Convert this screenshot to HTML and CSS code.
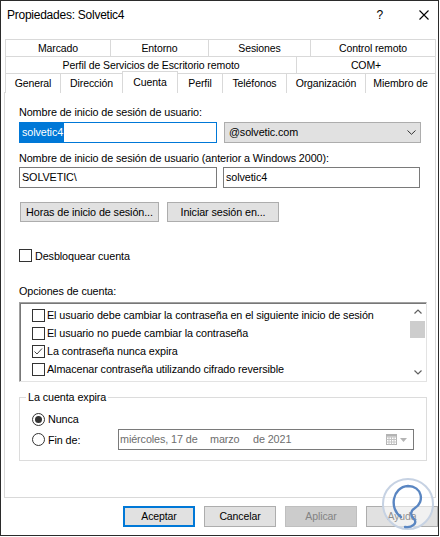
FILE: index.html
```html
<!DOCTYPE html>
<html lang="es">
<head>
<meta charset="utf-8">
<link rel="stylesheet" href="styles.css">
</head>
<body>
<div class="window">
  <div class="titlebar">
    <span class="title">Propiedades: Solvetic4</span>
    <span class="help">?</span>
    <svg class="close" width="10" height="10" viewBox="0 0 10 10"><path d="M0.5 0.5 L9.5 9.5 M9.5 0.5 L0.5 9.5" stroke="#000" stroke-width="1.1" fill="none"/></svg>
  </div>

  <div class="tabs">
    <div class="tabrow r1">
      <div class="tab">Marcado</div>
      <div class="tab">Entorno</div>
      <div class="tab">Sesiones</div>
      <div class="tab">Control remoto</div>
    </div>
    <div class="tabrow r2">
      <div class="tab">Perfil de Servicios de Escritorio remoto</div>
      <div class="tab">COM+</div>
    </div>
    <div class="tabrow r3">
      <div class="tab">General</div>
      <div class="tab">Dirección</div>
      <div class="tab sel">Cuenta</div>
      <div class="tab">Perfil</div>
      <div class="tab">Teléfonos</div>
      <div class="tab">Organización</div>
      <div class="tab">Miembro de</div>
    </div>
  </div>

  <div class="panel">
    <div class="lbl">Nombre de inicio de sesión de usuario:</div>
    <div class="frow frow1">
      <div class="field focus w198"><span class="seltext">solvetic4</span></div>
      <div class="field combo w197"><span>@solvetic.com</span>
        <svg width="9" height="5" viewBox="0 0 9 5"><path d="M0.5 0.5 L4.5 4.3 L8.5 0.5" stroke="#333" stroke-width="1" fill="none"/></svg>
      </div>
    </div>
    <div class="lbl lbl2">Nombre de inicio de sesión de usuario (anterior a Windows 2000):</div>
    <div class="frow frow2">
      <div class="field w198">SOLVETIC\</div>
      <div class="field w197">solvetic4</div>
    </div>
    <div class="brow">
      <div class="btn b1">Horas de inicio de sesión...</div>
      <div class="btn b2">Iniciar sesión en...</div>
    </div>
    <div class="check unlock"><span class="cbx"></span><span>Desbloquear cuenta</span></div>
    <div class="lbl lbl3">Opciones de cuenta:</div>
    <div class="listbox">
      <div class="items">
        <div class="item"><span class="cbx"></span><span>El usuario debe cambiar la contraseña en el siguiente inicio de sesión</span></div>
        <div class="item"><span class="cbx"></span><span>El usuario no puede cambiar la contraseña</span></div>
        <div class="item"><span class="cbx"><svg width="11" height="11" viewBox="0 0 11 11"><path d="M1.5 5.5 L4 8 L9 2.5" stroke="#444" stroke-width="1" fill="none"/></svg></span><span>La contraseña nunca expira</span></div>
        <div class="item"><span class="cbx"></span><span>Almacenar contraseña utilizando cifrado reversible</span></div>
      </div>
      <div class="vscroll">
        <div class="arrow"><svg width="8" height="5" viewBox="0 0 8 5"><path d="M0.5 4.5 L4 1 L7.5 4.5" stroke="#606060" stroke-width="1.2" fill="none"/></svg></div>
        <div class="thumb"></div>
        <div class="track"></div>
        <div class="arrow"><svg width="8" height="5" viewBox="0 0 8 5"><path d="M0.5 0.5 L4 4 L7.5 0.5" stroke="#606060" stroke-width="1.2" fill="none"/></svg></div>
      </div>
    </div>
    <fieldset class="group">
      <legend>La cuenta expira</legend>
      <div class="radio r-nunca"><span class="rdo on"></span><span>Nunca</span></div>
      <div class="radio r-fin"><span class="rdo"></span><span class="rlabel">Fin de:</span>
        <div class="datepick">
          <span class="d1">miércoles, 17 de</span><span class="d2">marzo</span><span>de 2021</span>
          <span class="dicons">
            <svg width="11" height="11" viewBox="0 0 11 11"><rect x="0.5" y="0.5" width="10" height="10" fill="#fff" stroke="#b4b4b4"/><path d="M0.5 3 H10.5 M0.5 5.5 H10.5 M0.5 8 H10.5 M3 3 V10.5 M5.5 3 V10.5 M8 3 V10.5" stroke="#c4c4c4" stroke-width="1"/><rect x="0.5" y="0.5" width="10" height="2" fill="#b4b4b4"/></svg>
            <svg width="7" height="4" viewBox="0 0 7 4"><path d="M0 0 H7 L3.5 4 Z" fill="#b4b4b4"/></svg>
          </span>
        </div>
      </div>
    </fieldset>
  </div>

  <div class="footer">
    <div class="pbtn default">Aceptar</div>
    <div class="pbtn">Cancelar</div>
    <div class="pbtn disabled">Aplicar</div>
    <div class="pbtn">Ayuda</div>
  </div>

  <svg class="watermark" width="58" height="62" viewBox="0 0 58 62">
    <circle cx="29" cy="29" r="25" fill="rgba(255,255,255,0.55)" stroke="#c6d2e3" stroke-width="2"/>
    <path d="M22 42 C10 34 13 12 29 11 C43 11 46 27 36 33 C31 36 31 40 35 44 C39 48 33 53 26 52" stroke="#5a86c2" stroke-width="2.4" fill="none" stroke-linecap="round"/>
  </svg>
</div>
</body>
</html>
```

FILE: styles.css
```css
* { box-sizing: border-box; }

body {
  margin: 0;
  background: #fff;
  font-family: "Liberation Sans", Arial, sans-serif;
  font-size: 10.5px;
  letter-spacing: -0.1px;
  color: #000;
}

.window {
  position: relative;
  width: 439px;
  height: 536px;
  border: 1px solid #2b2b2b;
  background: #fff;
  overflow: hidden;
}

/* title bar */
.titlebar {
  height: 27px;
  display: flex;
  align-items: center;
  padding: 0 9px 0 6px;
  font-size: 12px;
  letter-spacing: -0.25px;
}
.title { flex: 1; }
.help { margin-right: 36px; font-size: 12px; }
.close { display: block; }

/* tabs */
.tabs {
  margin: 11px 0 0 4px;
  width: 431px;
}
.tabrow { display: grid; height: 17px; }
.r1 { grid-template-columns: 105px 98px 102px 126px; }
.r2 { grid-template-columns: 291px 140px; }
.r3 { grid-template-columns: 55px 62px 55px 45px 64px 79px 71px; height: 19px; }

.tab {
  border-top: 1px solid #d9d9d9;
  border-left: 1px solid #d9d9d9;
  text-align: center;
  line-height: 16px;
  white-space: nowrap;
  background: #fff;
}
.tab:last-child { border-right: 1px solid #d9d9d9; }
.r3 .tab { line-height: 17px; padding-top: 1px; }
.r3 .tab.sel {
  position: relative;
  z-index: 2;
  margin-top: -2px;
  margin-right: -1px;
  height: 22px;
  padding-top: 0;
  line-height: 20px;
  border-right: 1px solid #d9d9d9;
}

/* panel */
.panel {
  margin-left: 3px;
  width: 432px;
  height: 406px;
  border: 1px solid #d9d9d9;
  padding: 13px 9px 0 14px;
  background: #fff;
  font-size: 10.8px;
}
.lbl { line-height: 13px; white-space: nowrap; }
.lbl2 { margin-top: 9px; }
.lbl3 { margin-top: 23px; }

.frow { display: flex; }
.frow1 { margin-top: 3px; gap: 7px; }
.frow2 { margin-top: 2px; gap: 6px; }
.w198 { width: 198px; }
.w197 { width: 197px; }

.field {
  height: 21px;
  border: 1px solid #7a7a7a;
  background: #fff;
  line-height: 19px;
  padding-left: 2px;
  white-space: nowrap;
}
.field.focus { border-color: #0078d7; padding-left: 0; }
.seltext {
  display: inline-block;
  background: #0078d7;
  color: #fff;
  padding: 0 1px 0 2px;
  line-height: 19px;
}
.combo {
  display: flex;
  align-items: center;
  justify-content: space-between;
  background: #e1e1e1;
  border-color: #adadad;
  padding: 0 4px 0 4px;
}
.combo svg { display: block; }

.brow { display: flex; gap: 8px; margin-top: 14px; padding-left: 1px; }
.btn {
  height: 20px;
  background: #e1e1e1;
  border: 1px solid #adadad;
  text-align: center;
  line-height: 18px;
  white-space: nowrap;
}
.b1 { width: 139px; }
.b2 { width: 112px; }

.check { display: flex; align-items: center; gap: 3px; height: 13px; }
.unlock { margin-top: 27px; }
.cbx {
  flex: none;
  display: flex;
  align-items: center;
  justify-content: center;
  width: 13px;
  height: 13px;
  border: 1px solid #333;
  background: #fff;
}
.cbx svg { display: block; }

/* listbox */
.listbox {
  margin-top: 4px;
  width: 408px;
  height: 80px;
  display: flex;
  border-top: 1px solid #a0a0a0;
  border-left: 1px solid #a0a0a0;
  border-right: 1px solid #e3e3e3;
  border-bottom: 1px solid #e3e3e3;
  box-shadow: inset 1px 1px 0 #777;
  background: #fff;
}
.items { flex: 1; padding: 3px 0 0 12px; }
.item {
  display: flex;
  align-items: center;
  gap: 2px;
  height: 18px;
  white-space: nowrap;
}
.vscroll {
  width: 17px;
  display: flex;
  flex-direction: column;
  align-items: center;
}
.arrow {
  height: 17px;
  width: 17px;
  display: flex;
  align-items: center;
  justify-content: center;
}
.arrow svg { display: block; }
.thumb {
  width: 15px;
  height: 17px;
  margin-top: 1px;
  background: #cdcdcd;
}
.track { flex: 1; }

/* group */
.group {
  margin: 9px 0 0;
  width: 408px;
  padding: 5px 12px 10px;
  border: 1px solid #dcdcdc;
  min-width: 0;
}
.group legend {
  margin-left: -6px;
  padding: 0 2px;
  line-height: 13px;
}
.radio { display: flex; align-items: center; }
.r-nunca { height: 20px; }
.r-fin { height: 21px; }
.rdo {
  flex: none;
  width: 13px;
  height: 13px;
  border: 1px solid #333;
  border-radius: 50%;
  margin-right: 3px;
  display: flex;
  align-items: center;
  justify-content: center;
  background: #fff;
}
.rdo.on::after {
  content: "";
  width: 7px;
  height: 7px;
  border-radius: 50%;
  background: #333;
}
.rlabel { width: 70px; }
.datepick {
  position: relative;
  width: 296px;
  height: 21px;
  border: 1px solid #7a7a7a;
  padding-left: 1px;
  line-height: 19px;
  color: #6d6d6d;
  white-space: nowrap;
  display: flex;
  align-items: center;
}
.d1 { width: 90px; }
.d2 { width: 43px; }
.dicons {
  margin-left: auto;
  margin-right: 6px;
  display: flex;
  align-items: center;
  gap: 3px;
}
.dicons svg { display: block; }

/* footer buttons */
.footer {
  display: flex;
  justify-content: flex-end;
  gap: 9px;
  margin-top: 8px;
}
.pbtn {
  width: 72px;
  height: 21px;
  background: #e1e1e1;
  border: 1px solid #adadad;
  text-align: center;
  line-height: 19px;
}
.pbtn.default { border: 2px solid #0078d7; line-height: 17px; }
.pbtn.disabled { background: #cccccc; border-color: #bfbfbf; color: #838383; }

.watermark {
  position: absolute;
  left: 378px;
  top: 474px;
}
```
